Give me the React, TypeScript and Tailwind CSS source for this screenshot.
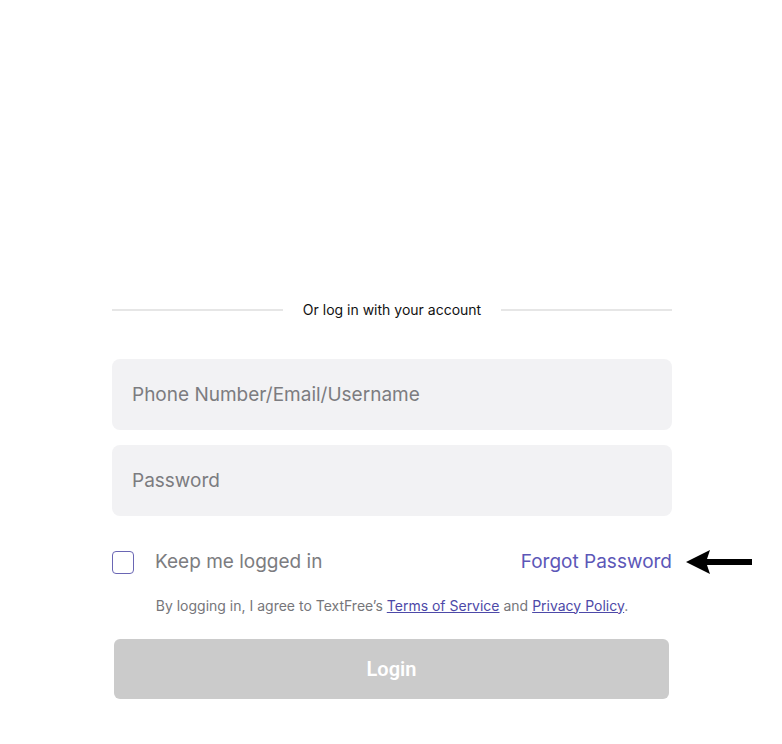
export default function App() {
  return (
    <div className="min-h-[744px] w-full bg-white" style={{ fontFamily: 'Inter, "Noto Sans", sans-serif' }}>
      <div className="ml-[112px] w-[560px] pt-[299px]">
        <div className="flex items-center gap-5">
          <div className="h-[2px] flex-1 bg-[#e6e6e6]" />
          <span className="text-[14px] leading-[22px] text-[#111]">Or log in with your account</span>
          <div className="h-[2px] flex-1 bg-[#e6e6e6]" />
        </div>

        <div className="mt-[38px] flex flex-col gap-[15px]">
          <input
            className="h-[71px] w-full rounded-lg bg-[#f2f2f4] px-5 text-[19px] text-[#333] outline-none placeholder:text-[#7c7c80]"
            placeholder="Phone Number/Email/Username"
          />
          <input
            type="password"
            className="h-[71px] w-full rounded-lg bg-[#f2f2f4] px-5 text-[19px] text-[#333] outline-none placeholder:text-[#7c7c80]"
            placeholder="Password"
          />
        </div>

        <div className="relative mt-[32px] flex items-center justify-between">
          <label className="flex items-center gap-[21px]">
            <span className="h-[23px] w-[22px] rounded-[4px] border border-[#6a66b4] bg-white" />
            <span className="text-[19px] text-[#7c7c80]">Keep me logged in</span>
          </label>
          <a className="text-[19px] text-[#5c57b8]">Forgot Password</a>
          <svg className="absolute left-[574px] top-1/2 -translate-y-1/2" width="68" height="24" viewBox="0 0 68 24">
            <path d="M0 12 L24 0 L21 9 H66 V15 H21 L24 24 Z" fill="#000" />
          </svg>
        </div>

        <p className="mt-[18px] text-center text-[14px] text-[#76767a]">
          By logging in, I agree to TextFree’s{' '}
          <a className="text-[#4d49a8] underline">Terms of Service</a> and{' '}
          <a className="text-[#4d49a8] underline">Privacy Policy</a>.
        </p>

        <button className="ml-[2px] mt-[23px] block h-[60px] w-[555px] rounded-md bg-[#cbcbcb] text-[20px] font-semibold text-white" style={{ fontFamily: 'Roboto, sans-serif' }}>
          Login
        </button>
      </div>
    </div>
  );
}
